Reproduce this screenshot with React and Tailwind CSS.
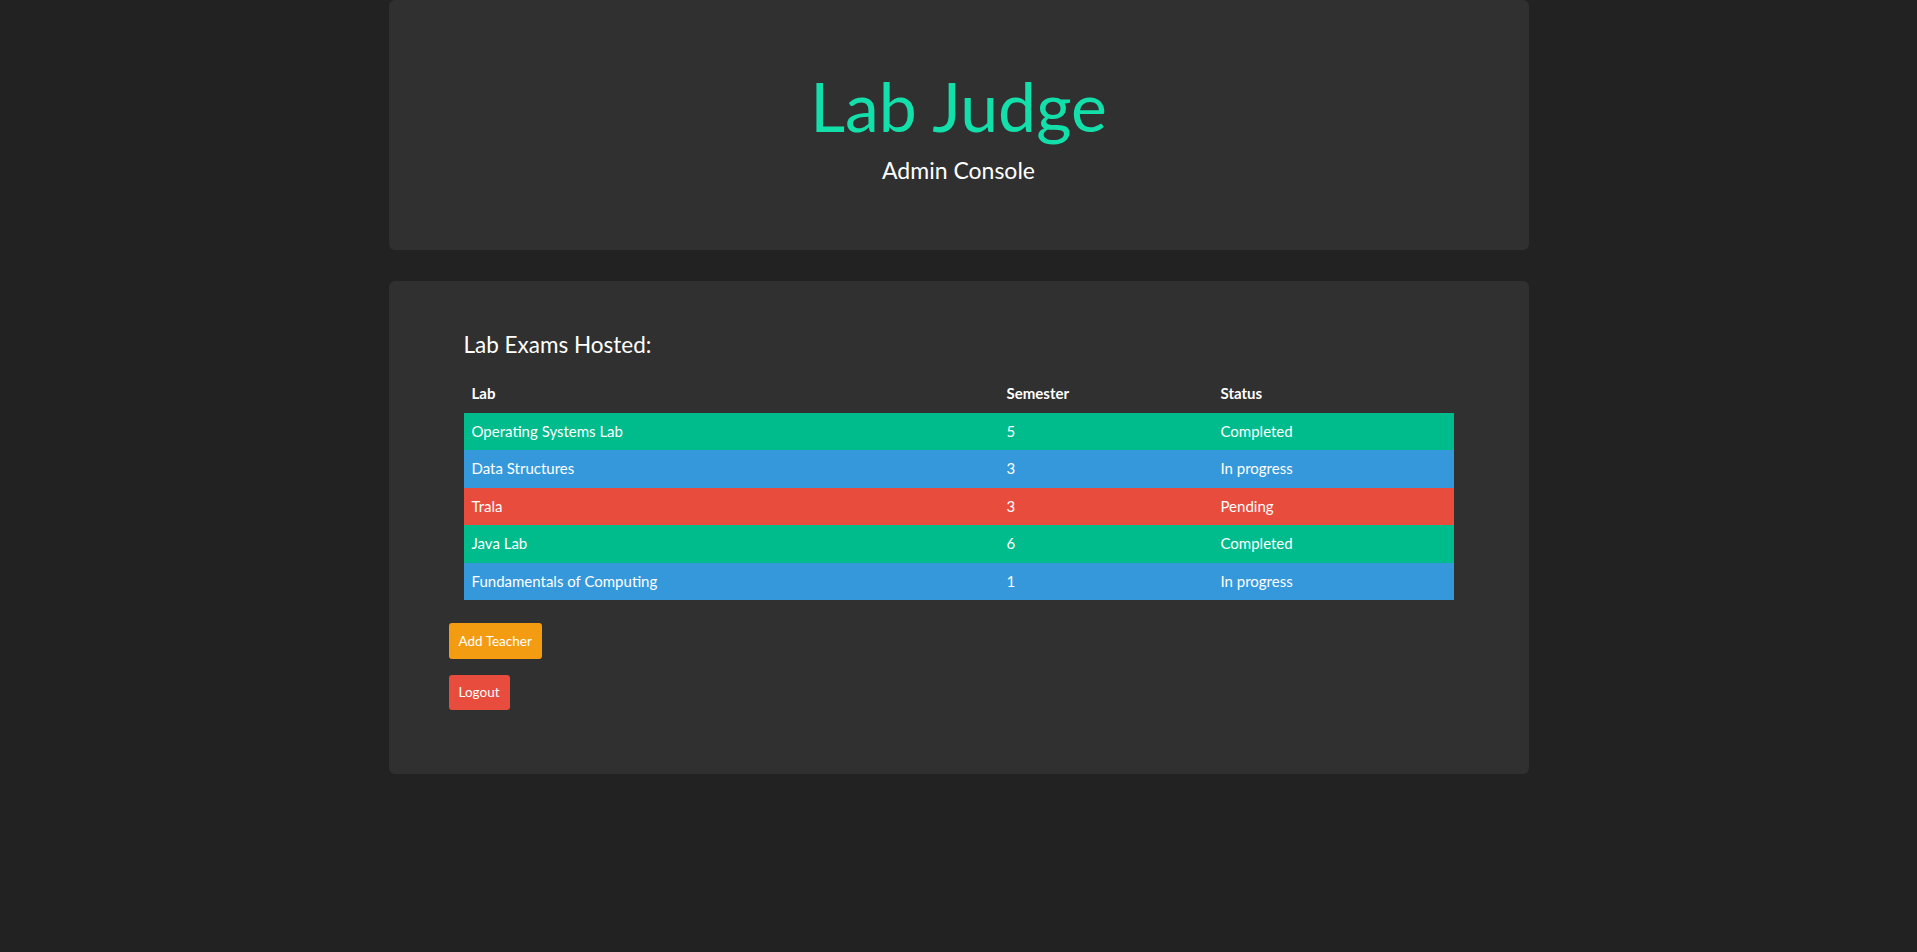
const labs = [
  { name: 'Operating Systems Lab', sem: 5, status: 'Completed' },
  { name: 'Data Structures', sem: 3, status: 'In progress' },
  { name: 'Trala', sem: 3, status: 'Pending' },
  { name: 'Java Lab', sem: 6, status: 'Completed' },
  { name: 'Fundamentals of Computing', sem: 1, status: 'In progress' },
];

const rowColor = {
  Completed: 'bg-[#00bc8c]',
  'In progress': 'bg-[#3498db]',
  Pending: 'bg-[#e74c3c]',
};

export default function App() {
  return (
    <div className="min-h-screen bg-[#222222] font-['Lato','Open_Sans',sans-serif] text-white">
      <div className="mx-auto w-[1140px]">
        {/* Header jumbotron */}
        <div className="rounded-[6px] bg-[#303030] pt-[69px] pb-[63px] text-center">
          <h1 className="text-[68px] leading-[1.1] font-normal text-[#12dfa9]">Lab Judge</h1>
          <p className="mt-[10px] text-[23px] leading-[1.4286]">Admin Console</p>
        </div>

        {/* Exams */}
        <div className="mt-[31px] rounded-[6px] bg-[#303030] px-[75px] pt-[52px] pb-[64px]">
          <h3 className="text-[22.5px] leading-[1.1] font-normal">Lab Exams Hosted:</h3>
          <table className="mt-[18px] w-full table-fixed border-collapse text-[15px] leading-[1.42857]">
            <colgroup>
              <col className="w-[535px]" />
              <col className="w-[214px]" />
              <col className="w-[241px]" />
            </colgroup>
            <thead>
              <tr className="text-left">
                <th className="px-2 py-2 font-bold">Lab</th>
                <th className="px-2 py-2 font-bold">Semester</th>
                <th className="px-2 py-2 font-bold">Status</th>
              </tr>
            </thead>
            <tbody>
              {labs.map((l) => (
                <tr key={l.name} className={rowColor[l.status]}>
                  <td className="h-[37.5px] px-2 py-2">{l.name}</td>
                  <td className="h-[37.5px] px-2 py-2">{l.sem}</td>
                  <td className="h-[37.5px] px-2 py-2">{l.status}</td>
                </tr>
              ))}
            </tbody>
          </table>

          <div className="-ml-[15px] mt-[23px] flex flex-col items-start gap-[16px]">
            <button className="h-[35.5px] rounded-[3px] bg-[#f39c12] px-[10px] text-[13.5px] leading-[1.5]">
              Add Teacher
            </button>
            <button className="h-[35.5px] rounded-[3px] bg-[#e74c3c] px-[10px] text-[13.5px] leading-[1.5]">
              Logout
            </button>
          </div>
        </div>
      </div>
    </div>
  );
}
